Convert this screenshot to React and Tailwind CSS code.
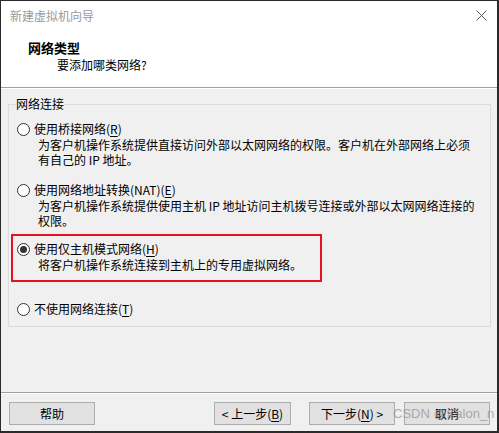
import React, { useState } from 'react';

const FONT = { fontFamily: '"Noto Sans CJK SC", "Microsoft YaHei", sans-serif' };

const OPTIONS = [
  { id: 'bridge', label: '使用桥接网络', key: 'R', desc: ['为客户机操作系统提供直接访问外部以太网网络的权限。客户机在外部网络上必须', '有自己的 IP 地址。'] },
  { id: 'nat', label: '使用网络地址转换(NAT)', key: 'E', desc: ['为客户机操作系统提供使用主机 IP 地址访问主机拨号连接或外部以太网网络连接的', '权限。'] },
  { id: 'host', label: '使用仅主机模式网络', key: 'H', desc: ['将客户机操作系统连接到主机上的专用虚拟网络。'] },
  { id: 'none', label: '不使用网络连接', key: 'T', desc: [] },
];

function Radio({ checked }) {
  return (
    <span className="w-[13px] h-[13px] rounded-full border border-[#333] bg-white flex items-center justify-center shrink-0">
      {checked && <span className="w-[7px] h-[7px] rounded-full bg-[#333]" />}
    </span>
  );
}

function Option({ o, checked, onPick }) {
  return (
    <div onClick={() => onPick(o.id)} className="cursor-default">
      <div className="flex items-center gap-[4px] h-[16px] leading-[16px]">
        <Radio checked={checked} />
        <span>{o.label}(<span className="underline underline-offset-2">{o.key}</span>)</span>
      </div>
      {o.desc.length > 0 && (
        <div className="ml-[21px] leading-[15px] whitespace-nowrap">
          {o.desc.map((l, i) => <div key={i}>{l}</div>)}
        </div>
      )}
    </div>
  );
}

export default function App() {
  const [net, setNet] = useState('host');

  return (
    <div style={FONT} className="w-[499px] h-[433px] flex flex-col bg-[#f0f0f0] border-t border-l border-r-2 border-b-2 border-[#2b2b2b] text-[12px] text-black overflow-hidden relative">
      {/* title bar + header */}
      <div className="bg-white border-b border-[#a0a0a0]">
        <div className="h-[29px] flex items-center justify-between pl-[9px] pr-[9px]">
          <span className="text-[#9a9a9a] text-[12px]">新建虚拟机向导</span>
          <svg width="11" height="11" viewBox="0 0 11 11" className="mr-[1px]">
            <path d="M0.5 0.5 L10.5 10.5 M10.5 0.5 L0.5 10.5" stroke="#555" strokeWidth="1" />
          </svg>
        </div>
        <div className="pt-[10px] pb-[14px] pl-[27px]">
          <div className="font-bold text-[13px] leading-[16px]">网络类型</div>
          <div className="mt-px ml-[29px] leading-[16px]">要添加哪类网络?</div>
        </div>
      </div>

      {/* body */}
      <div className="flex-1 border-t border-white">
        <fieldset className="mt-[7px] ml-[7px] mr-[6px] border border-[#dcdcdc] pl-[8px] pt-[9px] pb-[9px]">
          <legend className="ml-[-1px] px-[0px] leading-[16px]">网络连接</legend>
          <Option o={OPTIONS[0]} checked={net === 'bridge'} onPick={setNet} />
          <div className="mt-[15px]">
            <Option o={OPTIONS[1]} checked={net === 'nat'} onPick={setNet} />
          </div>
          <div className="mt-[6px] -ml-[6px] w-[311px] border-2 border-[#e81123] pl-[4px] pt-[5px] pb-[8px]">
            <Option o={OPTIONS[2]} checked={net === 'host'} onPick={setNet} />
          </div>
          <div className="mt-[19px]">
            <Option o={OPTIONS[3]} checked={net === 'none'} onPick={setNet} />
          </div>
        </fieldset>
      </div>

      {/* footer */}
      <div className="h-[39px] border-t border-[#a0a0a0]">
        <div className="border-t border-white h-full flex items-start pt-[8px] pl-[8px]">
          <button className="w-[86px] h-[23px] bg-[#e1e1e1] border border-[#adadad]">帮助</button>
          <button className="ml-[119px] w-[77px] h-[23px] bg-[#e1e1e1] border border-[#adadad]">
            &lt; 上一步(<span className="underline underline-offset-2">B</span>)
          </button>
          <button className="ml-[18px] w-[86px] h-[23px] bg-[#e1e1e1] border border-[#adadad]">
            下一步(<span className="underline underline-offset-2">N</span>) &gt;
          </button>
          <button className="ml-[9px] w-[86px] h-[23px] bg-[#e1e1e1] border border-[#adadad]">取消</button>
        </div>
      </div>

      <span
        className="absolute left-[392px] top-[405px] text-[13px] leading-[16px] text-[#8c8c8c]/70 pointer-events-none whitespace-nowrap"
        style={{ fontFamily: '"Liberation Sans", Arial, sans-serif' }}
      >
        CSDN @Kalon_n
      </span>
    </div>
  );
}
